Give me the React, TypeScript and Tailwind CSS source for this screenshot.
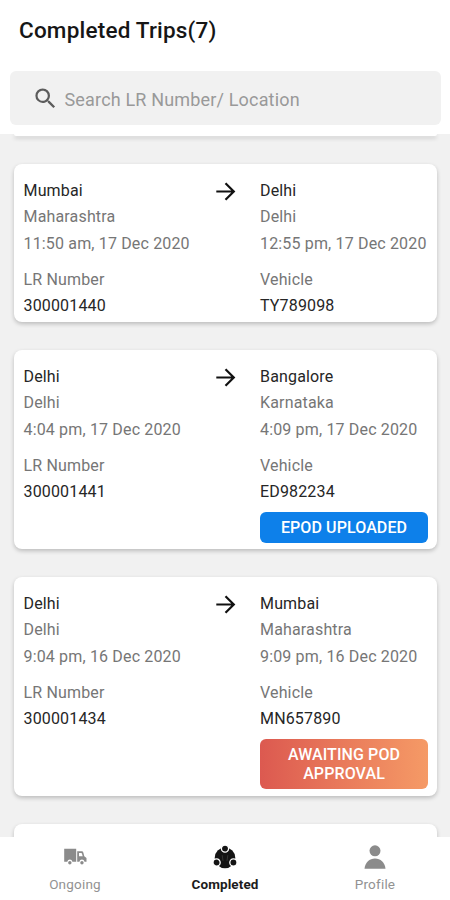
import { clsx } from "clsx";

type Stop = { city: string; state: string; time: string };

type Trip = {
  lr: string;
  vehicle: string;
  from: Stop;
  to: Stop;
  status?: "uploaded" | "awaiting";
};

const TRIPS: Trip[] = [
  {
    lr: "300001440",
    vehicle: "TY789098",
    from: { city: "Mumbai", state: "Maharashtra", time: "11:50 am, 17 Dec 2020" },
    to: { city: "Delhi", state: "Delhi", time: "12:55 pm, 17 Dec 2020" },
  },
  {
    lr: "300001441",
    vehicle: "ED982234",
    from: { city: "Delhi", state: "Delhi", time: "4:04 pm, 17 Dec 2020" },
    to: { city: "Bangalore", state: "Karnataka", time: "4:09 pm, 17 Dec 2020" },
    status: "uploaded",
  },
  {
    lr: "300001434",
    vehicle: "MN657890",
    from: { city: "Delhi", state: "Delhi", time: "9:04 pm, 16 Dec 2020" },
    to: { city: "Mumbai", state: "Maharashtra", time: "9:09 pm, 16 Dec 2020" },
    status: "awaiting",
  },
];

// ── Icons ─────────────────────────────────────────────────────────────────────

function SearchIcon() {
  return (
    <svg width="27" height="27" viewBox="0 0 24 24" fill="#5c5c5c" className="shrink-0" aria-hidden="true">
      <path d="M15.5 14h-.79l-.28-.27A6.47 6.47 0 0 0 16 9.5 6.5 6.5 0 1 0 9.5 16c1.61 0 3.09-.59 4.23-1.57l.27.28v.79l5 4.99L20.49 19l-4.99-5zm-6 0C7.01 14 5 11.99 5 9.5S7.01 5 9.5 5 14 7.01 14 9.5 11.99 14 9.5 14z" />
    </svg>
  );
}

function ArrowIcon() {
  return (
    <svg width="20" height="20" viewBox="0 0 20 20" fill="none" stroke="#111" strokeWidth="2.2" aria-hidden="true">
      <path d="M0.3 9.5H17.5M9.5 1.2 17.8 9.5l-8.3 8.3" />
    </svg>
  );
}

function TruckIcon() {
  return (
    <svg width="24" height="24" viewBox="0 0 24 24" fill="#8b8b8b" aria-hidden="true">
      <path d="M1.2 3.8h12v12.9H9.4a2.6 2.6 0 0 0-5.1 0H1.2z" />
      <path
        fillRule="evenodd"
        d="M14.2 6.3h4.2c1 0 1.7.5 2 1.4l.9 3.6 2.2 1.7v3.7h-2a2.6 2.6 0 0 0-5.1 0h-2.2zm1.8 1.7v3.2h3.7l-.8-2.7q-.2-.5-.7-.5z"
      />
      <circle cx="6.85" cy="17.8" r="1.7" />
      <circle cx="18.95" cy="17.8" r="1.7" />
    </svg>
  );
}

function GroupIcon() {
  return (
    <svg width="24" height="24" viewBox="0 0 24 24" fill="#141414" aria-hidden="true">
      <circle cx="12" cy="12.9" r="10.3" />
      <g stroke="#fff" strokeWidth="1.3">
        <circle cx="12" cy="3.6" r="3.6" />
        <circle cx="3.6" cy="17.5" r="3.6" />
        <circle cx="20.4" cy="17.5" r="3.6" />
      </g>
      <path d="M9.2 10.2 10 15.8M14.8 10.2 14 15.8" stroke="#555" strokeWidth="0.5" />
    </svg>
  );
}

function PersonIcon() {
  return (
    <svg width="24" height="24" viewBox="0 0 24 24" fill="#8b8b8b" aria-hidden="true">
      <circle cx="12" cy="5.8" r="5.5" />
      <path d="M1.5 23.7C2.1 17.5 6.5 13.5 12 13.5s9.9 4 10.5 10.2z" />
    </svg>
  );
}

// ── Trip card ─────────────────────────────────────────────────────────────────

function StopColumn({ stop, label, value }: { stop: Stop; label: string; value: string }) {
  return (
    <div className="whitespace-nowrap text-[16px] leading-[26.7px] tracking-[0.16px] text-[#767676]">
      <div className="text-[#262626]">{stop.city}</div>
      <div>{stop.state}</div>
      <div>{stop.time}</div>
      <div className="mt-[9px]">{label}</div>
      <div className="text-[#262626]">{value}</div>
    </div>
  );
}

function StatusButton({ status }: { status: "uploaded" | "awaiting" }) {
  return (
    <button
      type="button"
      className={clsx(
        "mt-[6px] block w-[168px] rounded-md px-5 text-center text-[16px] font-medium leading-[19px] tracking-[0.1px] text-white",
        status === "uploaded" ? "h-[31px] bg-[#0d80ea]" : "h-[50px] bg-linear-to-r from-[#dc5950] to-[#f59a66]",
      )}
    >
      {status === "uploaded" ? "EPOD UPLOADED" : "AWAITING POD APPROVAL"}
    </button>
  );
}

function TripCard({ trip }: { trip: Trip }) {
  return (
    <article
      className={clsx(
        "flex shrink-0 rounded-lg bg-white pl-[9.5px] pt-[13.5px] shadow-[0_2px_4px_rgba(0,0,0,0.22)]",
        !trip.status && "h-[158px]",
        trip.status === "uploaded" && "h-[199px]",
        trip.status === "awaiting" && "h-[219px]",
      )}
    >
      <div className="w-[192.5px]">
        <StopColumn stop={trip.from} label="LR Number" value={trip.lr} />
      </div>
      <div className="w-[44px] pt-[4.5px]">
        <ArrowIcon />
      </div>
      <div>
        <StopColumn stop={trip.to} label="Vehicle" value={trip.vehicle} />
        {trip.status && <StatusButton status={trip.status} />}
      </div>
    </article>
  );
}

function TabItem({ label, icon, active }: { label: string; icon: React.ReactNode; active?: boolean }) {
  return (
    <button
      type="button"
      className={clsx(
        "flex flex-1 flex-col items-center pt-2 text-[13.5px] leading-4",
        active ? "font-bold tracking-[0.1px] text-[#1c1c1c]" : "tracking-[0.2px] text-[#929292]",
      )}
    >
      {icon}
      <span className="mt-[7px]">{label}</span>
    </button>
  );
}

export default function App() {
  return (
    <div className="flex h-[900px] w-[450px] flex-col overflow-hidden bg-[#f1f1f1] font-['Roboto',sans-serif]">
      <header className="h-[134px] shrink-0 bg-white pl-[10px] pr-[9px] pt-[15px]">
        <h1 className="pl-[9px] text-[22.5px] font-medium leading-[30px] tracking-[0.2px] text-[#161616]">
          Completed Trips(7)
        </h1>
        <div className="mt-[26px] flex h-[54px] items-center rounded-md bg-[#f1f1f1] pl-[22px]">
          <SearchIcon />
          <span className="ml-[5.5px] pt-[2px] text-[18px] tracking-[0.17px] text-[#999]">Search LR Number/ Location</span>
        </div>
      </header>

      <main className="flex min-h-0 flex-1 flex-col gap-7 overflow-hidden pl-[14px] pr-[13px]">
        {/* bottom edge of the card scrolled under the header */}
        <div className="h-[2px] shrink-0 rounded-b-lg bg-white shadow-[0_2px_4px_rgba(0,0,0,0.22)]" />
        {TRIPS.map((trip) => (
          <TripCard key={trip.lr} trip={trip} />
        ))}
        <div className="h-10 shrink-0 rounded-t-lg bg-white shadow-[0_2px_4px_rgba(0,0,0,0.22)]" />
      </main>

      <nav className="flex h-[63px] shrink-0 bg-white">
        <TabItem label="Ongoing" icon={<TruckIcon />} />
        <TabItem label="Completed" icon={<GroupIcon />} active />
        <TabItem label="Profile" icon={<PersonIcon />} />
      </nav>
    </div>
  );
}
